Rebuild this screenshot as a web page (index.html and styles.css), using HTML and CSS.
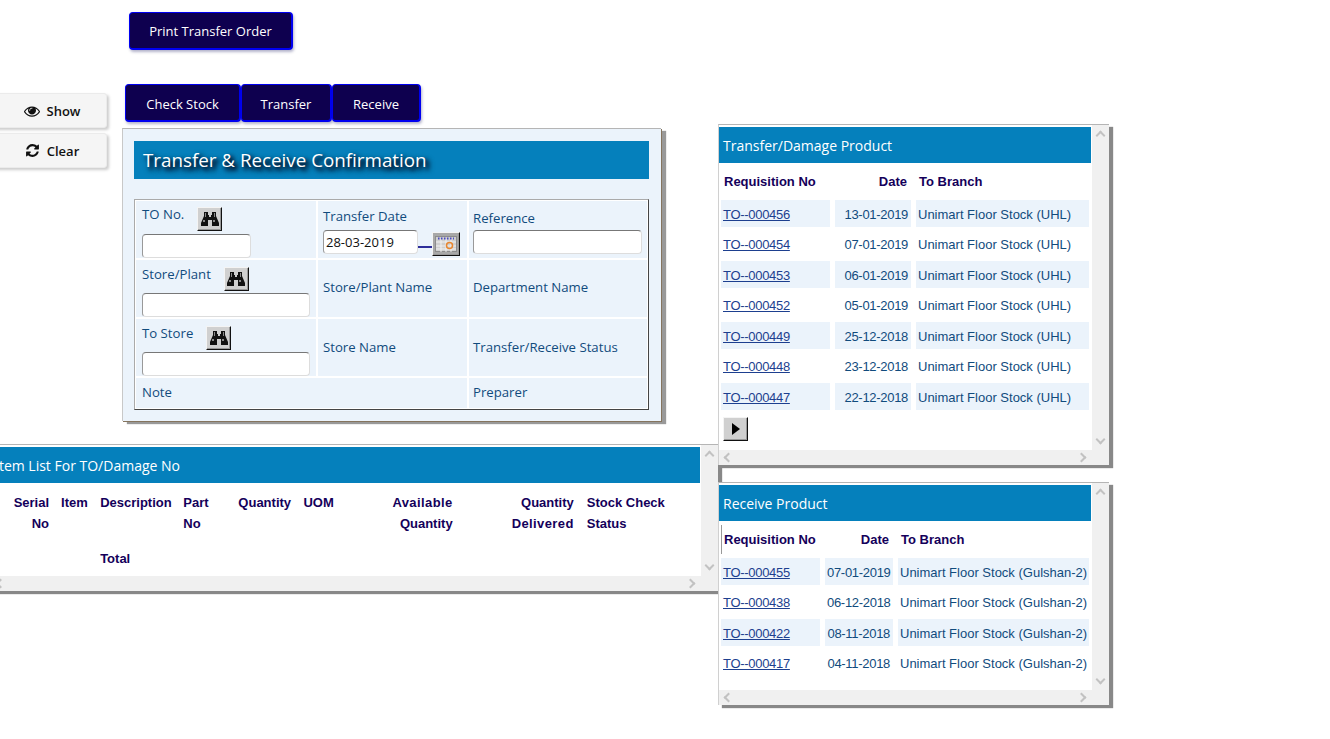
FILE: index.html
```html
<!DOCTYPE html>
<html lang="en">
<head>
    <meta charset="UTF-8">
    <meta name="viewport" content="width=device-width, initial-scale=1.0">
    <title>Transfer &amp; Receive Confirmation</title>
    <link rel="stylesheet" href="styles.css">
</head>
<body>
    <svg class="icon-defs" width="0" height="0">
        <symbol id="binoculars" viewBox="0 0 18 16">
            <path fill="#111" d="M3 1h4v3h1v2h2V4h1V1h4v4l3 7v3h-7V9H7v6H0v-3l3-7z"/>
            <path fill="#8a8a8a" d="M4 2h1v4H4zM13 2h1v4h-1zM2 9h2v2H2zM12 9h2v2h-2z"/>
        </symbol>
    </svg>

    <div class="page">
        <div class="left-col">
            <button class="dark-btn print-btn">Print Transfer Order</button>

            <div class="work-row">
                <div class="side-btns">
                    <button class="side-btn">
                        <svg class="side-icon eye" viewBox="0 0 1792 1792"><path d="M1664 960q-152-236-381-353 61 104 61 225 0 185-131.5 316.5t-316.5 131.5-316.5-131.5-131.5-316.5q0-121 61-225-229 117-381 353 133 205 333.5 326.5t434.5 121.5 434.5-121.5 333.5-326.5zm-720-384q0-20-14-34t-34-14q-125 0-214.5 89.5t-89.5 214.5q0 20 14 34t34 14 34-14 14-34q0-86 61-147t147-61q20 0 34-14t14-34zm848 384q0 34-20 69-140 230-376.5 368.5t-499.5 138.5-499.5-139-376.5-368q-20-35-20-69t20-69q140-229 376.5-368t499.5-139 499.5 139 376.5 368q20 35 20 69z"/></svg>
                        Show
                    </button>
                    <button class="side-btn">
                        <svg class="side-icon" viewBox="0 0 1792 1792"><path d="M1639 1056q0 5-1 7-64 268-268 434.5t-478 166.5q-146 0-282.5-55t-243.5-157l-129 129q-19 19-45 19t-45-19-19-45v-448q0-26 19-45t45-19h448q26 0 45 19t19 45-19 45l-137 137q71 66 161 102t187 36q134 0 250-65t186-179q11-17 53-117 8-23 30-23h192q13 0 22.5 9.5t9.5 22.5zm25-800v448q0 26-19 45t-45 19h-448q-26 0-45-19t-19-45 19-45l138-138q-148-137-349-137-134 0-250 65t-186 179q-11 17-53 117-8 23-30 23h-199q-13 0-22.5-9.5t-9.5-22.5v-7q65-268 270-434.5t480-166.5q146 0 284 55.5t245 156.5l130-129q19-19 45-19t45 19 19 45z"/></svg>
                        Clear
                    </button>
                </div>

                <div class="work-main">
                    <div class="tabs">
                        <button class="dark-btn tab-stock">Check Stock</button>
                        <button class="dark-btn tab-transfer">Transfer</button>
                        <button class="dark-btn tab-receive">Receive</button>
                    </div>

                    <div class="form-panel">
                        <h1 class="form-title">Transfer &amp; Receive Confirmation</h1>
                        <div class="form-frame">
                            <table class="form-table">
                                <colgroup><col class="col-a"><col class="col-b"><col class="col-c"></colgroup>
                                <tr class="row-tall">
                                    <td>
                                        <div class="label-line first-line"><span>TO No.</span><button class="tool-btn"><svg class="binoc"><use href="#binoculars"/></svg></button></div>
                                        <input class="field field-short" type="text">
                                    </td>
                                    <td>
                                        <div class="date-label">Transfer Date</div>
                                        <div class="date-line">
                                            <input class="field field-date" type="text" value="28-03-2019">
                                            <span class="date-link"></span>
                                            <button class="tool-btn cal-btn">
                                                <svg width="22" height="16" viewBox="0 0 22 16">
                                                    <rect x="0.500" y="0.500" width="21" height="15" fill="#cfcfcf" stroke="#8c8c8c"/>
                                                    <path d="M1 6h20M1 10h20M1 13h20M6 3v13M11 3v13M16 3v13" stroke="#f0f0f0" fill="none"/>
                                                    <path d="M3 2.500h16" stroke="#4a4ac0" stroke-dasharray="1.500 1.500" stroke-width="2"/>
                                                    <circle cx="14.500" cy="9.500" r="3" fill="none" stroke="#e8862e" stroke-width="1.500"/>
                                                </svg>
                                            </button>
                                        </div>
                                    </td>
                                    <td>
                                        <div class="ref-label">Reference</div>
                                        <input class="field field-ref" type="text">
                                    </td>
                                </tr>
                                <tr class="row-tall">
                                    <td>
                                        <div class="label-line"><span>Store/Plant</span><button class="tool-btn"><svg class="binoc"><use href="#binoculars"/></svg></button></div>
                                        <input class="field field-long" type="text">
                                    </td>
                                    <td class="cell-mid lift">Store/Plant Name</td>
                                    <td class="cell-mid lift">Department Name</td>
                                </tr>
                                <tr class="row-tall">
                                    <td>
                                        <div class="label-line"><span>To Store</span><button class="tool-btn"><svg class="binoc"><use href="#binoculars"/></svg></button></div>
                                        <input class="field field-long" type="text">
                                    </td>
                                    <td class="cell-mid">Store Name</td>
                                    <td class="cell-mid">Transfer/Receive Status</td>
                                </tr>
                                <tr class="row-short">
                                    <td class="cell-mid" colspan="2">Note</td>
                                    <td class="cell-mid">Preparer</td>
                                </tr>
                            </table>
                        </div>
                    </div>
                </div>
            </div>

            <div class="scroll-box item-box">
                <div class="scroll-body">
                    <h2 class="box-title item-title">Item List For TO/Damage No</h2>
                    <table class="item-table">
                        <colgroup>
                            <col class="c-serial"><col class="c-item"><col class="c-desc"><col class="c-part"><col class="c-qty"><col class="c-uom"><col class="c-avail"><col class="c-deliv"><col class="c-status">
                        </colgroup>
                        <tr>
                            <th class="num">Serial<br>No</th>
                            <th class="item-head">Item</th>
                            <th>Description</th>
                            <th>Part<br>No</th>
                            <th>Quantity</th>
                            <th>UOM</th>
                            <th class="num"><span class="wide-word">Available</span><br>Quantity</th>
                            <th class="num">Quantity<br><span class="wide-word">Delivered</span></th>
                            <th class="status-head">Stock Check<br>Status</th>
                        </tr>
                        <tr class="total-row">
                            <th></th><th></th><th>Total</th><th></th><th></th><th></th><th></th><th></th><th></th>
                        </tr>
                    </table>
                </div>
                <div class="vbar"><i class="arrow up"></i><i class="arrow down"></i></div>
                <div class="hbar"><i class="arrow left"></i><i class="arrow right"></i></div>
            </div>
        </div>

        <div class="right-col">
            <div class="scroll-box transfer-box">
                <div class="scroll-body">
                    <h2 class="box-title">Transfer/Damage Product</h2>
                    <table class="list-table transfer-table">
                        <colgroup><col class="c-req"><col class="c-date"><col class="c-branch"></colgroup>
                        <tr><th>Requisition No</th><th class="num">Date</th><th>To Branch</th></tr>
                        <tr class="odd"><td><a href="#">TO--000456</a></td><td class="num">13-01-2019</td><td>Unimart Floor Stock (UHL)</td></tr>
                        <tr><td><a href="#">TO--000454</a></td><td class="num">07-01-2019</td><td>Unimart Floor Stock (UHL)</td></tr>
                        <tr class="odd"><td><a href="#">TO--000453</a></td><td class="num">06-01-2019</td><td>Unimart Floor Stock (UHL)</td></tr>
                        <tr><td><a href="#">TO--000452</a></td><td class="num">05-01-2019</td><td>Unimart Floor Stock (UHL)</td></tr>
                        <tr class="odd"><td><a href="#">TO--000449</a></td><td class="num">25-12-2018</td><td>Unimart Floor Stock (UHL)</td></tr>
                        <tr><td><a href="#">TO--000448</a></td><td class="num">23-12-2018</td><td>Unimart Floor Stock (UHL)</td></tr>
                        <tr class="odd"><td><a href="#">TO--000447</a></td><td class="num">22-12-2018</td><td>Unimart Floor Stock (UHL)</td></tr>
                    </table>
                    <button class="tool-btn pager-btn"><span class="pager-arrow"></span></button>
                </div>
                <div class="vbar"><i class="arrow up"></i><i class="arrow down"></i></div>
                <div class="hbar"><i class="arrow left"></i><i class="arrow right"></i></div>
            </div>

            <div class="scroll-box receive-box">
                <div class="scroll-body">
                    <h2 class="box-title">Receive Product</h2>
                    <table class="list-table receive-table">
                        <colgroup><col class="c-req"><col class="c-date"><col class="c-branch"></colgroup>
                        <tr><th>Requisition No</th><th class="num">Date</th><th>To Branch</th></tr>
                        <tr class="odd"><td><a href="#">TO--000455</a></td><td class="num">07-01-2019</td><td>Unimart Floor Stock (Gulshan-2)</td></tr>
                        <tr><td><a href="#">TO--000438</a></td><td class="num">06-12-2018</td><td>Unimart Floor Stock (Gulshan-2)</td></tr>
                        <tr class="odd"><td><a href="#">TO--000422</a></td><td class="num">08-11-2018</td><td>Unimart Floor Stock (Gulshan-2)</td></tr>
                        <tr><td><a href="#">TO--000417</a></td><td class="num">04-11-2018</td><td>Unimart Floor Stock (Gulshan-2)</td></tr>
                    </table>
                </div>
                <div class="vbar"><i class="arrow up"></i><i class="arrow down"></i></div>
                <div class="hbar"><i class="arrow left"></i><i class="arrow right"></i></div>
            </div>
        </div>
    </div>
</body>
</html>
```

FILE: styles.css
```css
html, body {
    margin: 0;
    height: 739px;
    overflow: hidden;
    background: #fff;
}

body {
    font-family: "Open Sans", "Noto Sans", sans-serif;
    font-size: 13.2px;
    color: #114b7d;
}

.icon-defs {
    position: absolute;
}

button {
    font-family: inherit;
    cursor: pointer;
    padding: 0;
}

.page {
    display: flex;
    align-items: flex-start;
}

.left-col {
    width: 718px;
    flex: none;
}

.right-col {
    position: relative;
    z-index: 2;
    width: 391px;
    padding-top: 124px;
}

/* Dark buttons */
.dark-btn {
    height: 38px;
    padding-top: 2px;
    background: #0e004f;
    color: #fff;
    font-size: 13px;
    border: 1px solid #0000f0;
    border-width: 1px 2px 2px 1px;
    border-radius: 4px;
    box-shadow: 1px 2px 3px rgba(0, 0, 80, 0.3);
}

.print-btn {
    display: block;
    width: 164px;
    margin: 12px 0 0 129px;
    padding-top: 1px;
}

.work-row {
    display: flex;
    margin-top: 34px;
}

.side-btns {
    width: 107px;
    flex: none;
    margin: 9px 0 0 -6px;
}

.side-btn {
    display: flex;
    align-items: center;
    justify-content: center;
    gap: 7px;
    width: 113px;
    height: 35px;
    margin-bottom: 5px;
    padding-left: 3px;
    background: #f5f5f5;
    border: 1px solid #ebebeb;
    border-radius: 3px;
    box-shadow: 2px 2px 3px #ccc;
    color: #111;
    font-size: 13px;
    font-weight: 600;
}

.side-icon {
    width: 15px;
    height: 15px;
    fill: #111;
}

.side-icon.eye {
    width: 16px;
    height: 16px;
}

.work-main {
    margin-left: 21px;
}

.tabs {
    display: flex;
    margin-left: 3px;
    height: 44px;
}

.tab-stock {
    width: 116px;
}

.tab-transfer {
    width: 91px;
}

.tab-receive {
    width: 89px;
}

/* Form */
.form-panel {
    box-sizing: border-box;
    width: 539px;
    height: 293px;
    padding: 12px 12px 0 11px;
    background: #ebf3fb;
    border-top: 1px solid #b5b5b5;
    border-left: 1px solid #c8c8c8;
    box-shadow: 1px 1px 0 #85745e, 5px 3px 1px #999;
}

.form-title {
    margin: 0 0 20px;
    height: 38px;
    line-height: 38px;
    padding-left: 9px;
    background: #0580bc;
    color: #fff;
    font-size: 18.8px;
    font-weight: 400;
    text-shadow: 3px 3px 4px #001, 3px 3px 6px #002;
}

.form-frame {
    box-sizing: border-box;
    width: 515px;
    height: 211px;
    overflow: hidden;
    background: #fff;
    border: 1px solid;
    border-color: #aaa #444 #444 #aaa;
}

.form-table {
    width: 515px;
    margin: -1px 0 0 -1px;
    table-layout: fixed;
    border-collapse: separate;
    border-spacing: 2px;
}

.form-table td {
    padding: 0;
    background: #ebf3fb;
    vertical-align: top;
}

.col-a {
    width: 180px;
}

.col-b {
    width: 149px;
}

.row-tall {
    height: 57px;
}

.row-short {
    height: 30px;
}

.form-table td.cell-mid {
    vertical-align: middle;
    padding: 0 0 2px 5px;
}

.form-table td.lift {
    padding-bottom: 4px;
}

.form-table td.cell-mid:last-child {
    padding-left: 4px;
}

.form-table td.cell-mid:first-child {
    padding-left: 6px;
}

.label-line {
    display: flex;
    align-items: flex-start;
    height: 33px;
    padding: 7px 0 0 6px;
    box-sizing: border-box;
    line-height: 14px;
}

.label-line.first-line {
    padding-top: 6px;
}

.label-line span {
    margin-right: 13px;
}

.tool-btn {
    display: inline-flex;
    align-items: center;
    justify-content: center;
    box-sizing: border-box;
    width: 25px;
    height: 24px;
    background: #d0d0d0;
    border: 1px solid;
    border-color: #f4f4f4 #111 #111 #f4f4f4;
    box-shadow: inset -1px -1px 0 #999;
}

.binoc {
    width: 18px;
    height: 16px;
}

.field {
    display: block;
    box-sizing: border-box;
    height: 24px;
    padding: 0 2px;
    background: #fff;
    border: 1px solid;
    border-color: #777 #ddd #ddd #999;
    border-radius: 4px;
    font-family: inherit;
    font-size: 13px;
    color: #111;
}

.field-short {
    width: 109px;
    margin-left: 6px;
}

.field-long {
    width: 168px;
    margin-left: 6px;
}

.date-label {
    padding: 8px 0 0 5px;
    line-height: 14px;
}

.date-line {
    display: flex;
    align-items: flex-start;
    margin: 7px 0 0 5px;
}

.field-date {
    width: 95px;
}

.date-link {
    width: 14px;
    height: 2px;
    margin-top: 16px;
    background: #2e2e9a;
}

.cal-btn {
    width: 28px;
    margin-top: 2px;
    background: #a8a8a8;
}

.ref-label {
    padding: 10px 0 0 4px;
    line-height: 14px;
}

.field-ref {
    width: 169px;
    margin: 5px 0 0 4px;
}

/* Scroll boxes */
.scroll-box {
    display: grid;
    grid-template-columns: 1fr 17px;
    grid-template-rows: 1fr 15px;
    box-sizing: border-box;
    border-top: 1px solid #b5b5b5;
    border-left: 1px solid #d0d0d0;
    background: #fff;
    box-shadow: 4px 3px 1px #888;
}

.scroll-body {
    overflow: hidden;
    min-width: 0;
}

.box-title {
    margin: 2px 1px 0 0;
    height: 36px;
    line-height: 37px;
    padding-left: 4px;
    background: #0580bc;
    color: #fff;
    font-size: 14px;
    font-weight: 400;
}

.vbar {
    grid-column: 2;
    grid-row: 1 / span 2;
    display: flex;
    flex-direction: column;
    align-items: center;
    justify-content: space-between;
    padding: 7px 0 22px;
    background: #f0f0f0;
}

.hbar {
    grid-column: 1;
    grid-row: 2;
    display: flex;
    align-items: center;
    justify-content: space-between;
    padding: 0 7px 0 6px;
    background: #f0f0f0;
}

.arrow {
    display: block;
    width: 5px;
    height: 5px;
    border-top: 2px solid #c2c2c2;
    border-left: 2px solid #c2c2c2;
}

.arrow.up {
    transform: rotate(45deg);
}

.arrow.down {
    transform: rotate(225deg);
}

.arrow.left {
    transform: rotate(-45deg);
}

.arrow.right {
    transform: rotate(135deg);
}

.transfer-box {
    height: 341px;
    margin-bottom: 17px;
}

.receive-box {
    height: 223px;
}

/* Requisition lists */
.list-table {
    table-layout: fixed;
    width: 378px;
    margin-left: -3px;
    border-collapse: separate;
    border-spacing: 5px 4px;
    font-family: "Liberation Sans", Arial, sans-serif;
    font-size: 13px;
}

.list-table th {
    height: 28px;
    padding: 0 3px 1px;
    text-align: left;
    color: #14005a;
    font-size: 13px;
    white-space: nowrap;
}

.list-table td {
    height: 24.500px;
    padding: 2px 2px 0;
    color: #114b7d;
    white-space: nowrap;
}

.list-table .odd td {
    background: #ebf3fb;
}

.list-table a {
    color: #1d3f8f;
    letter-spacing: -0.3px;
}

.list-table td.num {
    text-align: right;
    padding-right: 3px;
    letter-spacing: -0.3px;
}

.list-table th.num {
    text-align: right;
    padding-right: 4px;
}

.transfer-table .c-req {
    width: 109px;
}

.transfer-table .c-date {
    width: 76px;
}

.receive-table .c-req {
    width: 99px;
}

.receive-table .c-date {
    width: 68px;
}

.receive-table th:first-child {
    border-left: 1px solid #999;
    padding-left: 2px;
}

.pager-btn {
    display: flex;
    width: 25px;
    height: 24px;
    margin: 3px 0 0 4px;
}

.pager-arrow {
    width: 0;
    height: 0;
    border-left: 8px solid #000;
    border-top: 6px solid transparent;
    border-bottom: 6px solid transparent;
}

/* Item list */
.item-box {
    width: 728px;
    height: 147px;
    margin: 23px 0 0 -10px;
}

.item-title {
    padding-left: 4px;
}

.item-table {
    table-layout: fixed;
    width: 690px;
    margin-top: 9px;
    border-collapse: collapse;
    font-family: "Liberation Sans", Arial, sans-serif;
    font-size: 13px;
}

.item-table th {
    padding: 0 3px;
    line-height: 21px;
    color: #14005a;
    text-align: left;
    vertical-align: top;
}

.item-table .num {
    text-align: right;
}

.item-table .item-head {
    padding-left: 9px;
}

.item-table .status-head {
    padding-left: 10px;
}

.item-table .total-row th {
    padding-top: 14px;
}

.wide-word {
    letter-spacing: 0.4px;
}

.c-serial {
    width: 61px;
}

.c-item {
    width: 45px;
}

.c-desc {
    width: 83px;
}

.c-part {
    width: 55px;
}

.c-qty {
    width: 65px;
}

.c-uom {
    width: 39px;
}

.c-avail {
    width: 116px;
}

.c-deliv {
    width: 121px;
}

.c-status {
    width: 104px;
}
```
